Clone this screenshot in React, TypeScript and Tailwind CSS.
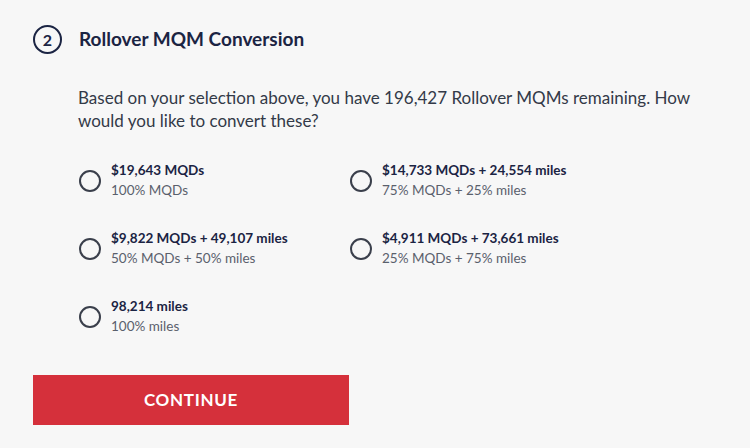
import React from "react";

const options = [
  { main: "$19,643 MQDs", sub: "100% MQDs" },
  { main: "$14,733 MQDs + 24,554 miles", sub: "75% MQDs + 25% miles" },
  { main: "$9,822 MQDs + 49,107 miles", sub: "50% MQDs + 50% miles" },
  { main: "$4,911 MQDs + 73,661 miles", sub: "25% MQDs + 75% miles" },
  { main: "98,214 miles", sub: "100% miles" },
];

function Option({ main, sub }: { main: string; sub: string }) {
  return (
    <div className="flex items-center gap-[10px] h-[68px]">
      <div className="w-[22px] h-[22px] rounded-full border-2 border-[#3a3f4b] shrink-0 mt-[2px]" />
      <div className="flex flex-col">
        <span className="text-[13.5px] leading-[20px] font-bold text-[#1b2443]">{main}</span>
        <span className="text-[13.5px] leading-[20px] text-[#5a606c]">{sub}</span>
      </div>
    </div>
  );
}

export default function App() {
  return (
    <div
      className="w-[750px] h-[448px] bg-[#f7f7f7] overflow-hidden"
      style={{ fontFamily: "Lato, 'Open Sans', sans-serif" }}
    >
      <div className="pt-[25px] pl-[33px]">
        <div className="flex items-center gap-[17px]">
          <div className="w-[29px] h-[29px] rounded-full border-[2.5px] border-[#1b2443] flex items-center justify-center text-[16px] font-bold text-[#1b2443]">
            2
          </div>
          <h2 className="text-[19px] font-bold text-[#1b2443]">Rollover MQM Conversion</h2>
        </div>
        <p className="mt-[32px] ml-[45px] w-[640px] text-[17px] leading-[23px] text-[#333a48]">
          Based on your selection above, you have 196,427 Rollover MQMs remaining. How would you
          like to convert these?
        </p>
        <div className="mt-[14px] ml-[46px] grid grid-cols-[271px_1fr]">
          {options.map((o) => (
            <Option key={o.main} main={o.main} sub={o.sub} />
          ))}
        </div>
        <button className="mt-[25px] w-[316px] h-[50px] bg-[#d5303b] text-white text-[17px] font-bold tracking-[0.7px] flex items-center justify-center">
          CONTINUE
        </button>
      </div>
    </div>
  );
}
